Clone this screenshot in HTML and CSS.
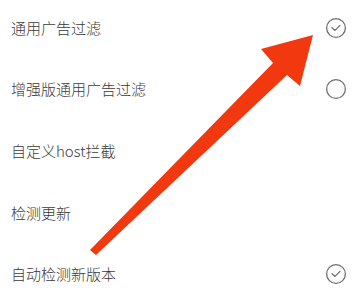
FILE: index.html
```html
<!DOCTYPE html>
<html lang="zh">
<head>
<meta charset="utf-8">
<link rel="stylesheet" href="styles.css">
</head>
<body>
<div class="list">
  <div class="row"><span class="label">通用广告过滤</span>
    <svg class="mark" viewBox="0 0 22 22"><circle cx="11" cy="11" r="9.4"/><path d="M7 10.8 L10 13.4 L15 8.4"/></svg></div>
  <div class="row"><span class="label">增强版通用广告过滤</span>
    <svg class="mark" viewBox="0 0 22 22"><circle cx="11" cy="11" r="9.4"/></svg></div>
  <div class="row"><span class="label">自定义host拦截</span></div>
  <div class="row"><span class="label">检测更新</span></div>
  <div class="row last"><span class="label">自动检测新版本</span>
    <svg class="mark" viewBox="0 0 22 22"><circle cx="11" cy="11" r="9.4"/><path d="M7 10.8 L10 13.4 L15 8.4"/></svg></div>
</div>
<svg class="arrow" viewBox="0 0 354 288" width="354" height="288">
  <polygon points="313,35 300,86 287,75 96,255 90,250 273,63 261,49"/>
</svg>
</body>
</html>
```
FILE: styles.css
```css
html, body {
  margin: 0;
  padding: 0;
  background: #ffffff;
  width: 354px;
  height: 288px;
  overflow: hidden;
}
body {
  position: relative;
  font-family: "Noto Sans CJK SC", "Noto Sans", sans-serif;
  color: #3a3a3a;
}
.list {
  display: flex;
  flex-direction: column;
  margin-top: -3px;
}
.row {
  height: 61.6px;
  display: flex;
  align-items: center;
  justify-content: space-between;
  padding: 0 7px 0 11px;
}
.row.last {
  height: 44px;
  align-items: flex-start;
  padding-top: 21px;
  box-sizing: border-box;
}
.label {
  font-size: 15px;
  line-height: 20px;
  font-weight: 300;
}
.mark {
  width: 22px;
  height: 22px;
  fill: none;
  stroke: #707070;
  stroke-width: 1.3;
  stroke-linecap: round;
  stroke-linejoin: round;
}
.row.last .mark {
  margin-top: -1px;
}
.arrow {
  position: absolute;
  left: 0;
  top: 0;
}
.arrow polygon {
  fill: #f2380f;
}
```
